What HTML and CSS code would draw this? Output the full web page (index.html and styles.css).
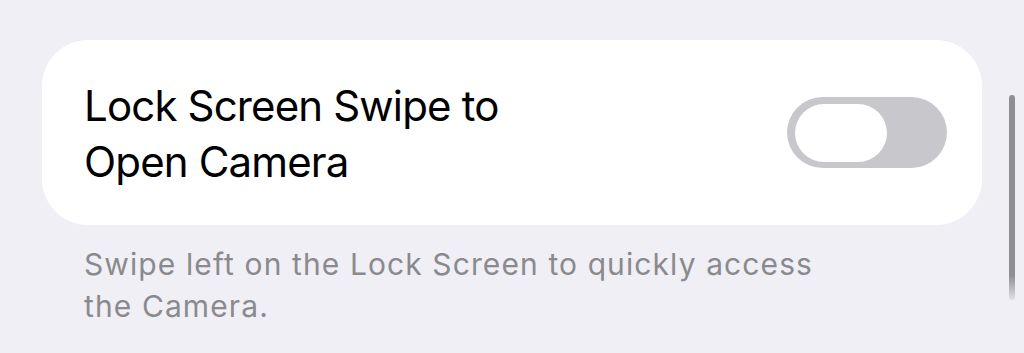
FILE: index.html
```html
<!DOCTYPE html>
<html>
<head>
<meta charset="utf-8">
<link rel="stylesheet" href="styles.css">
</head>
<body>
<div class="page">
  <div class="card">
    <div class="label">Lock Screen Swipe to<br>Open Camera</div>
    <div class="toggle"><div class="knob"></div></div>
  </div>
  <div class="footer">Swipe left on the Lock Screen to quickly access<br>the Camera.</div>
</div>
<div class="scrollbar"></div>
</body>
</html>
```
FILE: styles.css
```css
html, body {
  margin: 0;
  padding: 0;
  background: #f0eff5;
  height: 100%;
  overflow: hidden;
}
.page {
  padding: 40px 42px 0 42px;
  font-family: Inter, "Liberation Sans", sans-serif;
}
.card {
  background: #ffffff;
  border-radius: 46px;
  height: 185px;
  box-sizing: border-box;
  padding: 2px 35px 0 42px;
  display: flex;
  align-items: center;
  justify-content: space-between;
}
.label {
  font-size: 42px;
  line-height: 56px;
  color: #000;
  letter-spacing: -0.85px;
}
.toggle {
  width: 160px;
  height: 71px;
  border-radius: 36px;
  background: #c8c8cc;
  box-sizing: border-box;
  padding: 7px 8px;
  display: flex;
  align-items: center;
  margin-top: -2px;
}
.knob {
  width: 92px;
  height: 58px;
  border-radius: 29px;
  background: #fff;
}
.footer {
  padding: 18px 42px 0 42px;
  font-size: 30px;
  line-height: 42px;
  letter-spacing: 1.1px;
  color: #8a8a8e;
}
.scrollbar {
  position: absolute;
  left: 1009px;
  top: 95px;
  width: 6px;
  height: 205px;
  border-radius: 3px;
  background: linear-gradient(#8e8e93 88%, rgba(142,142,147,0.15));
}
```
